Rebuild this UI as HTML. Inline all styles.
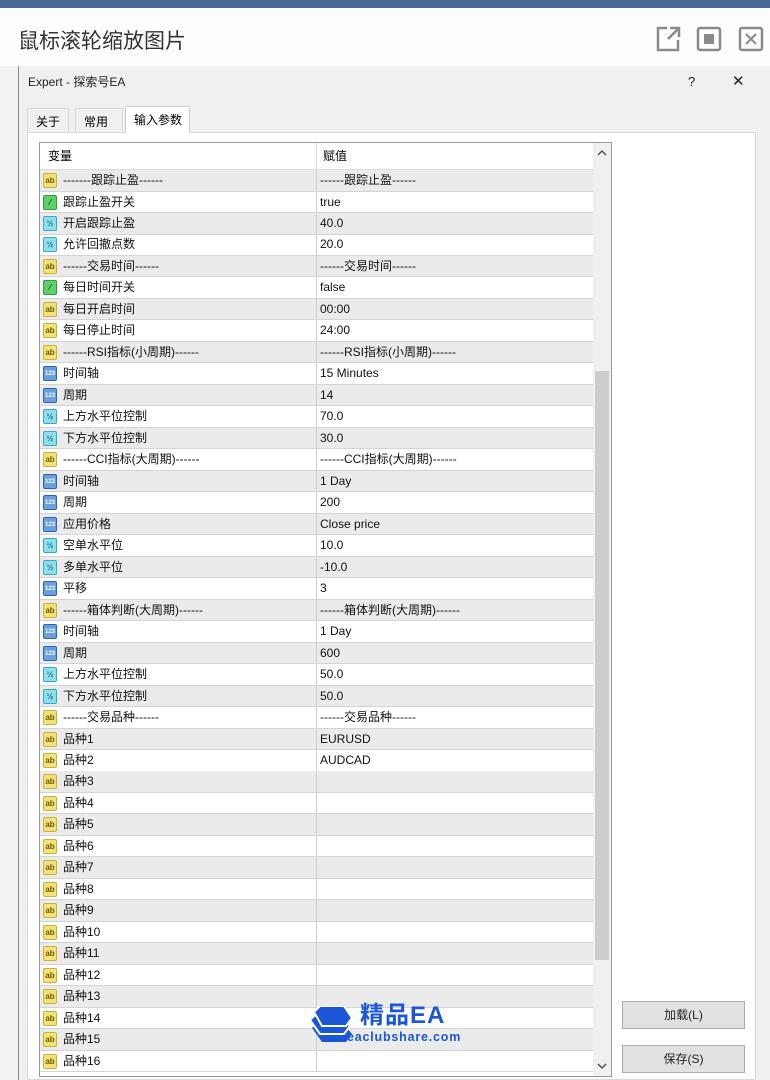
<!DOCTYPE html>
<html><head><meta charset="utf-8"><style>
*{margin:0;padding:0;box-sizing:border-box}
body{width:770px;height:1080px;overflow:hidden;background:#fff;font-family:"Liberation Sans","Noto Sans CJK SC",sans-serif;position:relative}
.a{position:absolute}
.row{position:absolute;left:40px;width:553px;height:21.5px;font-size:12px;line-height:20px;color:#111;border-bottom:1px solid #d4d4d4}
.row.g{background:#ebebeb}
.row .n{position:absolute;left:23px;top:0;white-space:nowrap}
.row .v{position:absolute;left:280px;top:0;white-space:nowrap}
.row .d{position:absolute;left:276px;top:0;bottom:-1px;width:1px;background:#d0d0d0}
.ic{position:absolute;left:3px;top:3px;width:14px;height:15px;border-radius:2px;font-size:8px;line-height:14px;text-align:center;font-weight:bold;font-family:"Liberation Sans",sans-serif}
.ab{background:#f3e27a;border:1px solid #c9b23c;color:#6b5a00}
.bo{background:#5fd06a;border:1px solid #2f9a3a;color:#0b4d12}
.fl{background:#8fe0ee;border:1px solid #3aa8c0;color:#1b6d80}
.it{background:#6aa0e0;border:1px solid #2d64b0;color:#fff;font-size:6px}
.btn{position:absolute;left:622px;width:123px;height:28px;background:#e1e1e1;border:1px solid #adadad;font-size:12px;text-align:center;line-height:26px;color:#222}
.t{font-size:12px;line-height:14px}
</style></head><body>
<div class="a" style="left:0;top:0;width:770px;height:8px;background:#4a6a96"></div>
<div class="a" style="left:0;top:8px;width:770px;height:58px;background:#fdfdfd"></div>
<div class="a" style="left:18px;top:28px;font-size:21px;line-height:28px;color:#333">鼠标滚轮缩放图片</div>
<svg class="a" style="left:655px;top:26px" width="110" height="26" viewBox="0 0 110 26" fill="none" stroke="#8a8a8a" stroke-width="2.5">
<path d="M12 2 H3 V24 H23 V14"/><path d="M15 2 H24 V11 M24 2 L13 13"/>
<rect x="43" y="2" width="22" height="22" rx="2"/><rect x="49" y="8" width="10" height="10" fill="#8a8a8a" stroke="none"/>
<rect x="85" y="2" width="22" height="22" rx="2"/><path d="M91 8 L101 18 M101 8 L91 18" stroke-width="2"/>
</svg>
<div class="a" style="left:0;top:66px;width:18px;height:1014px;background:#f3f3f3"></div>
<div class="a" style="left:18px;top:66px;width:752px;height:1014px;background:#f0f0f0;border-left:1px solid #888"></div>
<div class="a t" style="left:28px;top:75px;color:#222">Expert - 探索号EA</div>
<div class="a" style="left:688px;top:74px;font-size:13px;color:#222">?</div>
<div class="a" style="left:732px;top:72px;font-size:15px;color:#222">✕</div>
<div class="a t" style="left:27px;top:108px;width:42px;height:24px;border:1px solid #d9d9d9;border-bottom:none;padding:6px 0 0 8px">关于</div>
<div class="a t" style="left:75px;top:108px;width:48px;height:24px;border:1px solid #d9d9d9;border-bottom:none;padding:6px 0 0 8px">常用</div>
<div class="a t" style="left:125px;top:106px;width:65px;height:27px;background:#fff;border:1px solid #d0d0d0;border-bottom:none;padding:6px 0 0 8px;z-index:2">输入参数</div>
<div class="a" style="left:27px;top:132px;width:729px;height:948px;background:#fff;border:1px solid #d9d9d9"></div>
<div class="a" style="left:39px;top:142px;width:573px;height:935px;border:1px solid #999;background:#fff"></div>
<div class="a" style="left:40px;top:143px;width:553px;height:27px;background:#fff;border-bottom:1px solid #ddd;font-size:12px;line-height:14px"><span class="a" style="left:8px;top:6px">变量</span><span class="a" style="left:283px;top:6px">赋值</span><div class="a" style="left:276px;top:0;height:27px;width:1px;background:#ddd"></div></div>
<div class="a" style="left:593px;top:143px;width:18px;height:933px;background:#f0f0f0"></div>
<div class="a" style="left:595px;top:371px;width:14px;height:589px;background:#cdcdcd"></div>
<svg class="a" style="left:596px;top:149px" width="12" height="8"><path d="M2 6 L6 2 L10 6" stroke="#555" stroke-width="1.5" fill="none"/></svg>
<svg class="a" style="left:596px;top:1062px" width="12" height="8"><path d="M2 2 L6 6 L10 2" stroke="#555" stroke-width="1.5" fill="none"/></svg>
<div id="rows"></div>
<div class="btn" style="top:1001px">加载(L)</div>
<div class="btn" style="top:1045px">保存(S)</div>
<svg class="a" style="left:304px;top:1006px" width="50" height="42" viewBox="0 0 50 42"><path d="M8 22 L18 36 L42 36 L48 28 L38 16 L14 16 Z" fill="#1a56d6"/><path d="M6 14 L16 28 L40 28 L46 20 L36 8 L12 8 Z" fill="#1a56d6" stroke="#fff" stroke-width="2"/><path d="M10 6 L18 20 L42 20 L48 12 L40 0 L16 0 Z" fill="#1a56d6" stroke="#fff" stroke-width="2"/></svg>
<div class="a" style="left:360px;top:1002px;font-size:24px;line-height:28px;font-weight:bold;color:#1a56d6;letter-spacing:1px">精品EA</div>
<div class="a" style="left:347px;top:1030px;font-size:12.5px;line-height:14px;font-weight:bold;color:#1a56d6;letter-spacing:0.8px">eaclubshare.com</div>
<script>
var R=[["ab","-------跟踪止盈------","------跟踪止盈------"],["bo","跟踪止盈开关","true"],["fl","开启跟踪止盈","40.0"],["fl","允许回撤点数","20.0"],["ab","------交易时间------","------交易时间------"],["bo","每日时间开关","false"],["ab","每日开启时间","00:00"],["ab","每日停止时间","24:00"],["ab","------RSI指标(小周期)------","------RSI指标(小周期)------"],["it","时间轴","15 Minutes"],["it","周期","14"],["fl","上方水平位控制","70.0"],["fl","下方水平位控制","30.0"],["ab","------CCI指标(大周期)------","------CCI指标(大周期)------"],["it","时间轴","1 Day"],["it","周期","200"],["it","应用价格","Close price"],["fl","空单水平位","10.0"],["fl","多单水平位","-10.0"],["it","平移","3"],["ab","------箱体判断(大周期)------","------箱体判断(大周期)------"],["it","时间轴","1 Day"],["it","周期","600"],["fl","上方水平位控制","50.0"],["fl","下方水平位控制","50.0"],["ab","------交易品种------","------交易品种------"],["ab","品种1","EURUSD"],["ab","品种2","AUDCAD"]];
for(var i=3;i<=16;i++)R.push(["ab","品种"+i,""]);
var T={ab:"ab",bo:"⁄",fl:"½",it:"123"},h="";
R.forEach(function(r,i){h+='<div class="row'+(i%2==0?' g':'')+'" style="top:'+(170+i*21.48).toFixed(1)+'px"><div class="ic '+r[0]+'">'+T[r[0]]+'</div><span class="n">'+r[1]+'</span><div class="d"></div><span class="v">'+r[2]+'</span></div>';});
document.getElementById("rows").innerHTML=h;
</script>
</body></html>
